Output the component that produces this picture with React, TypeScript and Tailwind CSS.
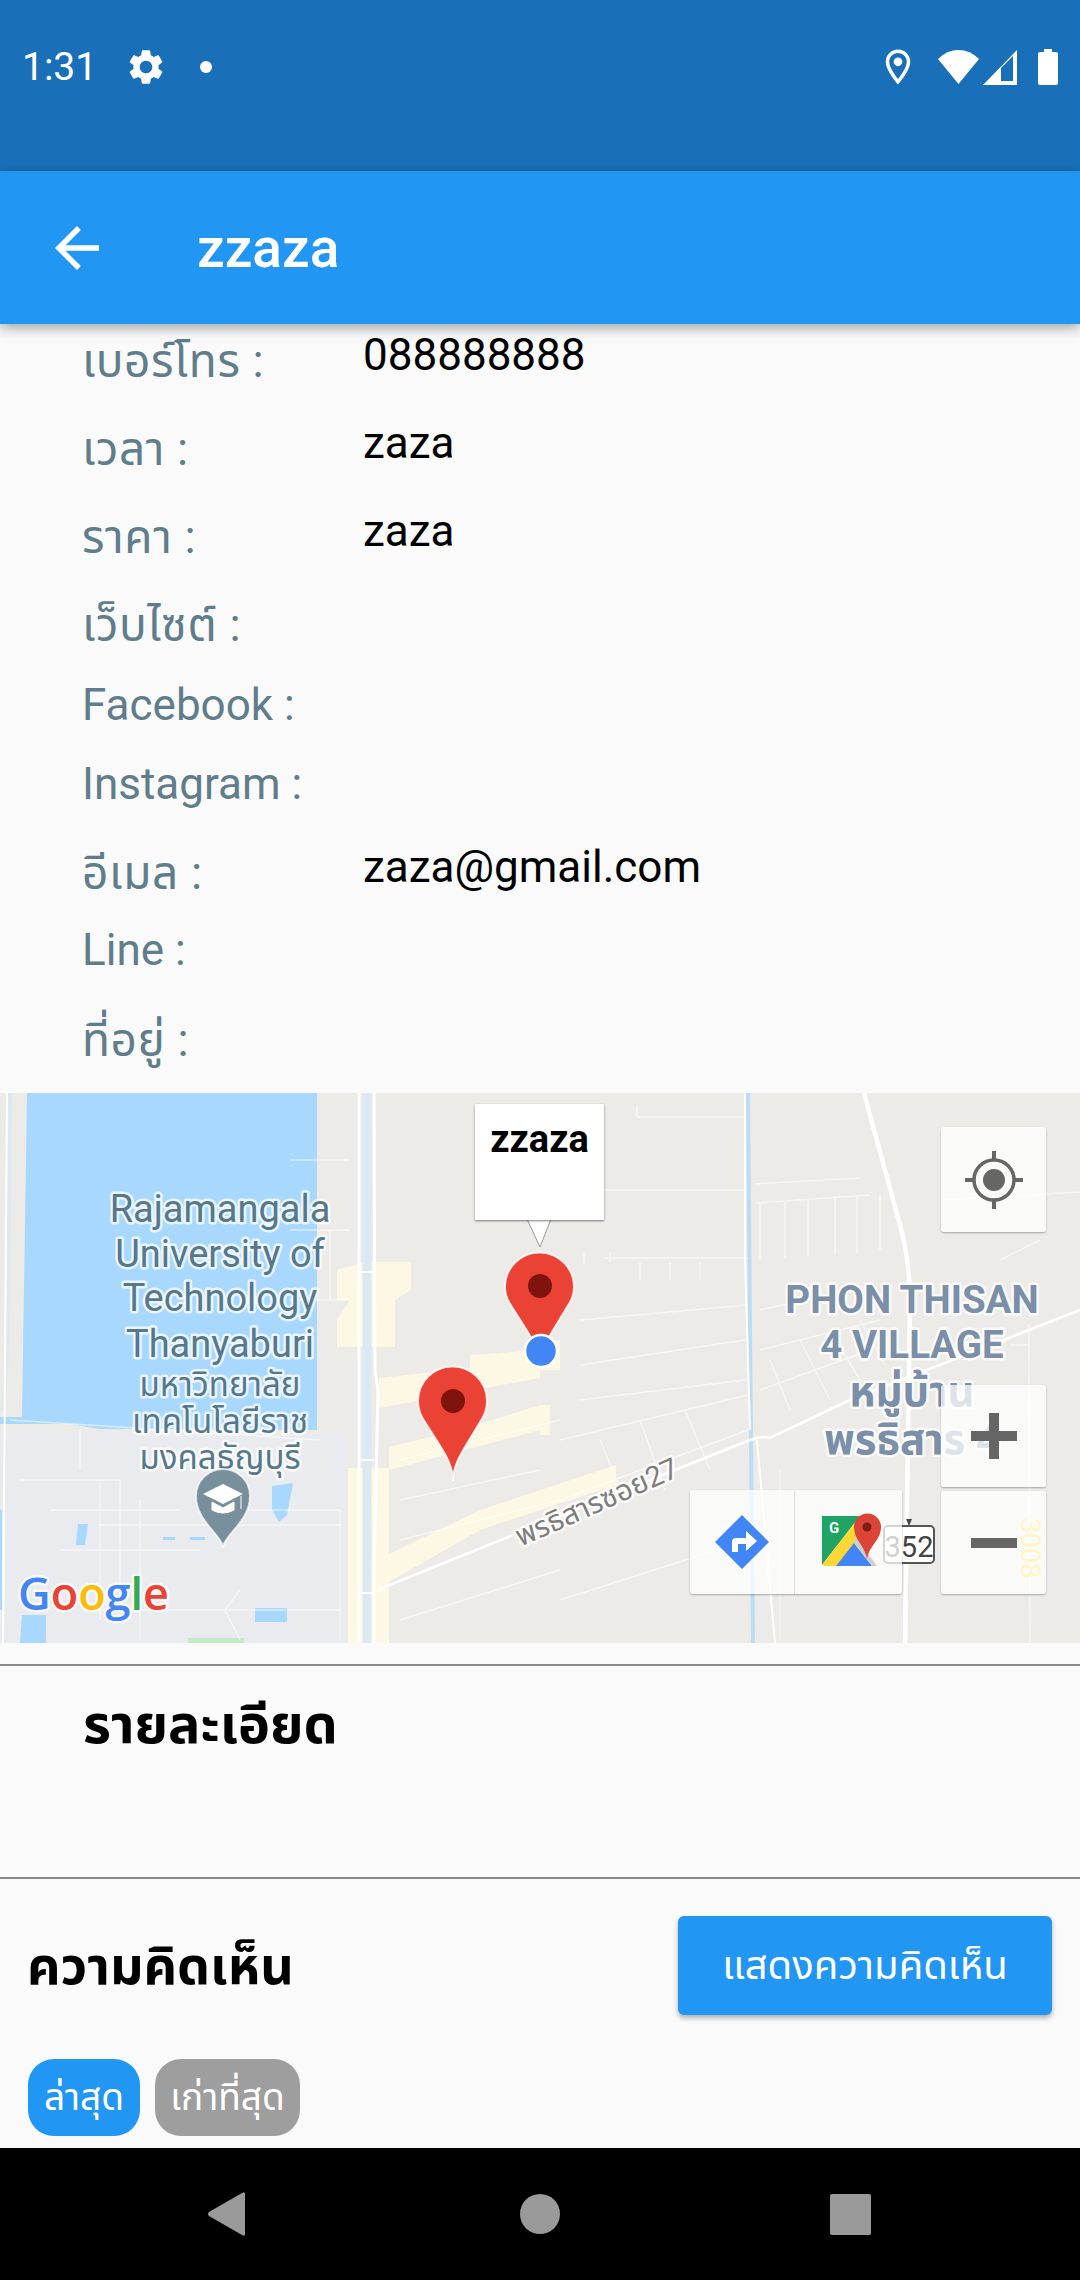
import React from 'react';

const FONT = 'font-["Roboto","Noto_Sans_Thai","Noto_Sans","Noto_Sans_CJK_SC",sans-serif]';

type Row = { label: string; value?: string; thai?: boolean; height: string };

const rows: Row[] = [
  { label: 'เบอร์โทร :', value: '088888888', thai: true, height: 'h-[88px]' },
  { label: 'เวลา :', value: 'zaza', thai: true, height: 'h-[88px]' },
  { label: 'ราคา :', value: 'zaza', thai: true, height: 'h-[88px]' },
  { label: 'เว็บไซต์ :', thai: true, height: 'h-[80px]' },
  { label: 'Facebook :', height: 'h-[79px]' },
  { label: 'Instagram :', height: 'h-[89px]' },
  { label: 'อีเมล :', value: 'zaza@gmail.com', thai: true, height: 'h-[77px]' },
  { label: 'Line :', height: 'h-[90px]' },
  { label: 'ที่อยู่ :', thai: true, height: 'h-[88px]' },
];

// thin side streets, in page coordinates
const streets = [
  'M637 1117H745',
  'M637 1105V1117',
  'M604 1190H745',
  'M604 1258H748',
  'M755 1184L860 1178',
  'M755 1203L870 1195',
  'M760 1202V1260M785 1200V1258M808 1200V1257M835 1198V1255M857 1197V1254M880 1195V1250',
  'M945 1200L1080 1192',
  'M640 1280V1262M670 1280V1262M700 1280V1262',
  'M584 1265V1252M610 1262V1252',
  'M580 1320L748 1305',
  'M580 1365L745 1340',
  'M580 1400L745 1380',
  'M560 1440L748 1395',
  'M560 1500L748 1430',
  'M600 1440L625 1500M640 1420L665 1490M685 1410L710 1470',
  'M760 1310L850 1290',
  'M760 1350L880 1320M760 1390L870 1350',
  'M770 1360L790 1410M800 1340L830 1400M830 1330L860 1380M860 1320L885 1365',
  'M1000 1260L1040 1240',
  'M1029 1324V1350L1030 1642',
  'M1010 1345H1029',
  'M780 1640V1470',
  'M560 1600L748 1540',
  'M400 1620L560 1570',
  'M400 1540L560 1500',
  'M400 1460L560 1420',
  'M400 1500L540 1470',
  'M290 1160H350M290 1230H350M290 1300H350',
  'M330 1230V1300',
  'M10 1420L320 1440',
  'M20 1480H120V1600M50 1510H180M60 1550H200M100 1480V1620M140 1500V1640',
  'M80 1470V1430',
  'M100 1525H340M95 1610H340',
  'M230 1510H340V1640',
  'M240 1590L225 1610L240 1640',
];

function MapDrawing() {
  return (
    <svg viewBox="0 1093 1080 550" className="absolute inset-0 h-full w-full">
      <rect x="0" y="1093" width="1080" height="550" fill="#ecebe8" />
      <rect x="0" y="1433" width="346" height="210" fill="#e9ebee" />

      {/* water */}
      <path d="M27 1093H317V1430L100 1429L70 1424H0V1417H22Z" fill="#a9d8ff" />
      <path d="M272 1486L293 1483L287 1515L279 1522L272 1510Z" fill="#a9d8ff" />
      <path d="M78 1524H88L85 1545H76Z" fill="#a9d8ff" />
      <rect x="255" y="1608" width="32" height="14" fill="#a9d8ff" />
      <path d="M22 1615H46V1643H20Z" fill="#a9d8ff" />
      <path d="M0 1510H2V1610H0ZM163 1537H175V1540H163ZM190 1537H205V1540H190Z" fill="#a9d8ff" />
      <path d="M3 1410L8 1340L10 1093" stroke="#dfe8ee" strokeWidth="4" fill="none" />
      <rect x="188" y="1638" width="56" height="5" fill="#c5e8c5" />

      {/* built up blocks */}
      <g fill="#fdf8e4">
        <path d="M337 1270L365 1262H411V1290L395 1300V1347H337V1320L350 1300H337Z" />
        <path d="M379 1378L470 1368V1355L540 1350V1378L379 1408Z" />
        <path d="M389 1447L460 1430L540 1405V1430L389 1470Z" />
        <path d="M348 1468H389V1643H348Z" />
        <path d="M375 1561L480 1510L616 1465V1485L480 1530L375 1590Z" />
        <path d="M540 1340H560V1370H540ZM540 1405H550V1435H540Z" />
      </g>

      {/* main roads and canals */}
      <path d="M367 1093V1643" stroke="#dde9f2" strokeWidth="9" fill="none" />
      <path d="M359 1093V1643M374 1093L375 1370L378 1390L374 1580V1643" stroke="#ffffff" strokeWidth="3" fill="none" />
      <path d="M359 1272H374M359 1460H374M359 1593H374" stroke="#ffffff" strokeWidth="2" fill="none" />
      <path d="M748 1093L751 1440L753 1643" stroke="#bcdcf6" strokeWidth="4" fill="none" />
      <path d="M745 1093V1258L750 1430" stroke="#ffffff" strokeWidth="2" fill="none" />
      <path d="M757 1440L775 1643" stroke="#ffffff" strokeWidth="2" fill="none" />
      <path d="M864 1093L900 1225Q910 1262 910 1300L905 1643" stroke="#ffffff" strokeWidth="4.5" fill="none" />
      <path d="M377 1590L600 1500L750 1440Q760 1436 770 1438L850 1400L1029 1330L1080 1310" stroke="#ffffff" strokeWidth="2.5" fill="none" />
      <path d="M7 1093L3 1643" stroke="#ffffff" strokeWidth="2" fill="none" />
      <g stroke="#ffffff" strokeWidth="1.5" fill="none" opacity="0.55">
        {streets.map((d) => (
          <path key={d} d={d} />
        ))}
      </g>

      {/* labels */}
      <g
        fontFamily="Roboto, 'Noto Sans Thai', 'Noto Sans', sans-serif"
        textAnchor="middle"
        paintOrder="stroke"
        stroke="#ffffff"
        strokeOpacity="0.75"
        strokeWidth="5"
        strokeLinejoin="round"
      >
        <g fill="#56788a" fontSize="38">
          <text x="220" y="1222">Rajamangala</text>
          <text x="220" y="1267">University of</text>
          <text x="220" y="1311">Technology</text>
          <text x="220" y="1357">Thanyaburi</text>
        </g>
        <g fill="#56788a" fontSize="33">
          <text x="220" y="1396">มหาวิทยาลัย</text>
          <text x="220" y="1433">เทคโนโลยีราช</text>
          <text x="220" y="1469">มงคลธัญบุรี</text>
        </g>
        <g fill="#7b8fa9" fontSize="38.5" fontWeight="700">
          <text x="912" y="1313">PHON THISAN</text>
          <text x="912" y="1358">4 VILLAGE</text>
          <text x="912" y="1406" fontSize="42">หมู่บ้าน</text>
          <text x="912" y="1454" fontSize="42">พรธิสาร 4</text>
        </g>
        <text x="597" y="1512" fontSize="29" fill="#7d7d7d" transform="rotate(-24 597 1503)">
          พรธิสารซอย27
        </text>
        <text
          x="0"
          y="0"
          fontSize="27"
          fill="#ffdd00"
          stroke="none"
          transform="translate(1021 1548) rotate(90)"
        >
          3008
        </text>
      </g>

      {/* route shield */}
      <rect x="884" y="1526" width="50" height="37" rx="4" fill="#ffffff" stroke="#555555" strokeWidth="2" />
      <text x="909" y="1557" fontFamily="Roboto, sans-serif" fontSize="29" textAnchor="middle" fill="#444444">
        352
      </text>
      <path d="M906 1519L912 1519L909 1526Z" fill="#444444" />

      {/* university pin */}
      <path
        d="M223 1546C218 1532 196 1520 196 1496A27 27 0 0 1 250 1496C250 1520 228 1532 223 1546Z"
        fill="#78909c"
        stroke="#ffffff"
        strokeOpacity="0.7"
        strokeWidth="2"
      />
      <path d="M223 1484L243 1494L223 1504L203 1494Z" fill="#ffffff" />
      <path d="M212 1502V1510Q223 1516 234 1510V1502L223 1508Z M241 1496V1509" fill="#ffffff" stroke="#ffffff" strokeWidth="1" />

      {/* google logo */}
      <text
        x="18"
        y="1610"
        fontFamily="'Open Sans', Roboto, sans-serif"
        fontSize="45"
        fontWeight="600"
        paintOrder="stroke"
        stroke="#ffffff"
        strokeOpacity="0.7"
        strokeWidth="5"
        strokeLinejoin="round"
      >
        <tspan fill="#4285f4">G</tspan>
        <tspan fill="#ea4335">o</tspan>
        <tspan fill="#fbbc05">o</tspan>
        <tspan fill="#4285f4">g</tspan>
        <tspan fill="#34a853">l</tspan>
        <tspan fill="#ea4335">e</tspan>
      </text>

      {/* markers */}
      <path
        d="M453 1481C453 1462 441 1448 425 1422C420 1415 418 1409 418 1401A34.5 34.5 0 0 1 487 1401C487 1409 485 1415 480 1422C465 1448 453 1462 453 1481Z"
        fill="#ea4335"
        stroke="#ffffff"
        strokeOpacity="0.8"
        strokeWidth="2"
      />
      <circle cx="453" cy="1401" r="12" fill="#7f130e" />
      <path
        d="M540 1366C540 1347 528 1333 512 1307C507 1300 505 1294 505 1287A34.5 34.5 0 0 1 574 1287C574 1294 572 1300 567 1307C552 1333 540 1347 540 1366Z"
        fill="#ea4335"
        stroke="#ffffff"
        strokeOpacity="0.8"
        strokeWidth="2"
      />
      <circle cx="540" cy="1286" r="12" fill="#7f130e" />
      <circle cx="541" cy="1351" r="16" fill="#4285f4" stroke="#ffffff" strokeWidth="2.5" />

      {/* info window tail */}
      <path d="M527 1219L540 1247L551 1219Z" fill="#ffffff" stroke="#9a9a9a" strokeWidth="1" />
    </svg>
  );
}

function MapButton({ className, children }: { className: string; children: React.ReactNode }) {
  return (
    <div className={`absolute flex items-center justify-center rounded-[3px] bg-white/75 shadow-[0_1px_2px_rgba(0,0,0,0.3)] ${className}`}>
      {children}
    </div>
  );
}

function MapSection() {
  return (
    <div className="relative h-[550px] overflow-hidden">
      <MapDrawing />

      <div className="absolute left-[475px] top-[11px] flex h-[116px] w-[129px] justify-center bg-white pt-[14px] text-[38px] font-bold leading-[42px] text-black shadow-[0_1px_2px_rgba(0,0,0,0.5)]">
        zzaza
      </div>

      <MapButton className="left-[941px] top-[34px] h-[105px] w-[105px]">
        <svg viewBox="0 0 60 60" className="h-[60px] w-[60px]">
          <circle cx="30" cy="30" r="20" fill="none" stroke="#666666" strokeWidth="3.5" />
          <circle cx="30" cy="30" r="11" fill="#666666" />
          <path d="M30 1V11M30 49V59M1 30H11M49 30H59" stroke="#666666" strokeWidth="4" />
        </svg>
      </MapButton>

      <MapButton className="left-[941px] top-[292px] h-[102px] w-[105px]">
        <svg viewBox="0 0 46 46" className="h-[46px] w-[46px]">
          <path d="M0 23H46M23 0V46" stroke="#666666" strokeWidth="10" />
        </svg>
      </MapButton>

      <MapButton className="left-[941px] top-[398px] h-[103px] w-[105px]">
        <svg viewBox="0 0 46 10" className="h-[10px] w-[46px]">
          <rect width="46" height="10" fill="#666666" />
        </svg>
      </MapButton>

      <div className="absolute left-[690px] top-[397px] flex h-[104px] w-[212px] rounded-[3px] bg-white/75 shadow-[0_1px_2px_rgba(0,0,0,0.3)]">
        <div className="flex w-[105px] items-center justify-center border-r border-[#dedede]">
          <svg viewBox="0 0 54 54" className="h-[54px] w-[54px]">
            <path d="M27 0L54 27L27 54L0 27Z" fill="#4285f4" />
            <path d="M17 37V27Q17 23 21 23H31V16L42 26L31 36V29H23V37Z" fill="#ffffff" />
          </svg>
        </div>
        <div className="flex flex-1 items-center justify-center pl-[6px]">
          <svg viewBox="0 0 60 58" className="h-[58px] w-[60px]">
            <path d="M0 3H38L0 52Z" fill="#1fa463" />
            <path d="M0 52L38 3L44 20L18 53H3Z" fill="#fdd835" />
            <path d="M14 53L32 30L50 53Z" fill="#4285f4" />
            <path d="M34 24L55 53H50L32 30Z" fill="#cfcfcf" />
            <path d="M45 46C43 33 32 27 32 14A13.5 13.5 0 0 1 59 14C59 27 47 33 45 46Z" fill="#db4437" />
            <circle cx="45" cy="14" r="4.5" fill="#7f1d17" />
            <text x="7" y="20" fontSize="15" fontWeight="700" fontFamily="Roboto, sans-serif" fill="#ffffff">G</text>
          </svg>
        </div>
      </div>
    </div>
  );
}

export default function App() {
  return (
    <div className={`flex h-[2280px] w-[1080px] flex-col overflow-hidden bg-[#fafafa] ${FONT}`}>
      {/* status bar */}
      <div className="h-[171px] shrink-0 bg-[#1a70b8] text-white">
        <div className="flex h-[134px] items-center pl-[22px] pr-[22px]">
          <span className="w-[106px] text-[39px] leading-none">1:31</span>
          <svg viewBox="0 0 24 24" className="ml-[-3px] h-[42px] w-[42px]" fill="#ffffff">
            <path d="M19.14 12.94c.04-.3.06-.61.06-.94 0-.32-.02-.64-.07-.94l2.03-1.58c.18-.14.23-.41.12-.61l-1.92-3.32c-.12-.22-.37-.29-.59-.22l-2.39.96c-.5-.38-1.03-.7-1.62-.94l-.36-2.54c-.04-.24-.24-.41-.48-.41h-3.84c-.24 0-.43.17-.47.41l-.36 2.54c-.59.24-1.13.57-1.62.94l-2.39-.96c-.22-.08-.47 0-.59.22L2.74 8.87c-.12.21-.08.47.12.61l2.03 1.58c-.05.3-.09.63-.09.94s.02.64.07.94l-2.03 1.58c-.18.14-.23.41-.12.61l1.92 3.32c.12.22.37.29.59.22l2.39-.96c.5.38 1.03.7 1.62.94l.36 2.54c.05.24.24.41.48.41h3.84c.24 0 .44-.17.47-.41l.36-2.54c.59-.24 1.13-.56 1.62-.94l2.39.96c.22.08.47 0 .59-.22l1.92-3.32c.12-.22.07-.47-.12-.61l-2.01-1.58zM12 15.6c-1.98 0-3.6-1.62-3.6-3.6s1.62-3.6 3.6-3.6 3.6 1.62 3.6 3.6-1.62 3.6-3.6 3.6z" />
          </svg>
          <span className="ml-[33px] h-[12px] w-[12px] rounded-full bg-white" />
          <div className="ml-auto flex items-center">
            <svg viewBox="0 0 24 24" className="h-[42px] w-[42px]" fill="#ffffff">
              <path d="M12 2C8.13 2 5 5.13 5 9c0 5.25 7 13 7 13s7-7.75 7-13c0-3.87-3.13-7-7-7zM7 9c0-2.76 2.24-5 5-5s5 2.24 5 5c0 2.88-2.88 7.19-5 9.88C9.92 16.21 7 11.85 7 9z" />
              <circle cx="12" cy="9" r="2.5" />
            </svg>
            <svg viewBox="0 0 41 34" className="ml-[19px] h-[34px] w-[41px]" fill="#ffffff">
              <path d="M20.5 34L0 9Q9 0 20.5 0T41 9Z" />
            </svg>
            <svg viewBox="0 0 34 35" className="ml-[4px] h-[35px] w-[34px]">
              <path d="M0 35L34 0V35Z" fill="#ffffff" />
              <path d="M18 31V18L30 6V31Z" fill="#1a70b8" />
              <path d="M14 31L0 35H34V31Z" fill="#ffffff" />
            </svg>
            <svg viewBox="0 0 20 36" className="ml-[21px] h-[36px] w-[20px]" fill="#ffffff">
              <path d="M6 0H14V3H18Q20 3 20 5V34Q20 36 18 36H2Q0 36 0 34V5Q0 3 2 3H6Z" />
            </svg>
          </div>
        </div>
      </div>

      {/* app bar */}
      <div className="relative z-10 flex h-[153px] shrink-0 items-center bg-[#2196f3] pl-[44px] text-white shadow-[0_4px_12px_rgba(0,0,0,0.35)]">
        <svg viewBox="0 0 24 24" className="h-[66px] w-[66px]" fill="#ffffff">
          <path d="M20 11H7.83l5.59-5.59L12 4l-8 8 8 8 1.41-1.41L7.83 13H20v-2z" />
        </svg>
        <span className="ml-[87px] pt-[2px] text-[55px] font-medium leading-none">zzaza</span>
      </div>

      {/* scrolled content */}
      <div className="min-h-0 flex-1 overflow-hidden">
        <div className="-mt-[7px] pl-[82px]">
          {rows.map((row) => (
            <div key={row.label} className={`flex text-[44px] leading-[88px] ${row.height}`}>
              <div className={`w-[281px] shrink-0 text-[#607d8b] ${row.thai ? 'text-[46px] tracking-[0.6px]' : ''}`}>
                {row.label}
              </div>
              {row.value && <div className="leading-[76px] text-black">{row.value}</div>}
            </div>
          ))}
        </div>

        <div className="mt-[9px]">
          <MapSection />
        </div>

        <div className="mt-[21px] h-[2px] bg-[#8a8a8a]" />
        <div className="h-[211px] pl-[83px] pt-[24px] text-[54px] font-bold leading-[70px] text-black">รายละเอียด</div>
        <div className="h-[2px] bg-[#8a8a8a]" />

        <div className="flex items-center justify-between pl-[27px] pr-[28px] pt-[37px]">
          <div className="pt-[3px] text-[52px] font-bold leading-[70px] text-black">ความคิดเห็น</div>
          <div className="flex h-[99px] w-[374px] items-center justify-center rounded-[6px] bg-[#2196f3] text-[40px] text-white shadow-[0_3px_5px_rgba(0,0,0,0.3)]">
            แสดงความคิดเห็น
          </div>
        </div>

        <div className="mt-[44px] flex gap-[15px] pl-[28px] text-[37px] text-white">
          <div className="flex h-[77px] w-[112px] items-center justify-center rounded-[26px] bg-[#2196f3]">ล่าสุด</div>
          <div className="flex h-[77px] w-[145px] items-center justify-center rounded-[26px] bg-[#9e9e9e]">เก่าที่สุด</div>
        </div>
      </div>

      {/* navigation bar */}
      <div className="flex h-[132px] shrink-0 items-center justify-between bg-black pl-[207px] pr-[209px]">
        <svg viewBox="0 0 38 46" className="h-[46px] w-[38px]" fill="#9a9a9a">
          <path d="M38 3V43Q38 46 35 44L2 25Q0 23 2 21L35 2Q38 0 38 3Z" />
        </svg>
        <span className="ml-[5px] h-[40px] w-[40px] rounded-full bg-[#9a9a9a]" />
        <span className="h-[41px] w-[41px] rounded-[2px] bg-[#9a9a9a]" />
      </div>
    </div>
  );
}
